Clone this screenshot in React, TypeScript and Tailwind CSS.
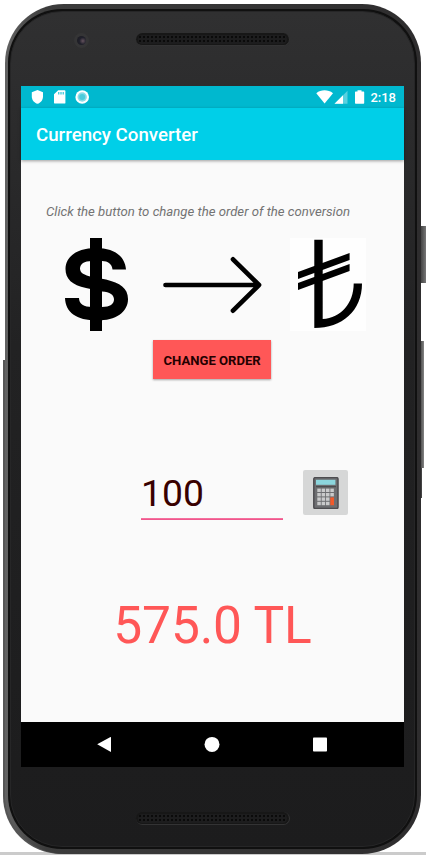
import React, { useState } from "react";

function Speaker() {
  return (
    <div className="h-[13px] w-[154px] rounded-full border-b border-r border-[#333334] bg-[#171717] p-[2px]">
      <div className="h-[9px] w-full rounded-full bg-[radial-gradient(circle,#0a0a0a_0.7px,#1d1d1e_1.6px)] bg-[length:4px_4px]" />
    </div>
  );
}

function StatusBar() {
  return (
    <div className="flex h-[22px] items-center justify-between bg-[#00b8cf] pl-[10px] pr-[8px] text-white">
      <div className="flex items-center gap-[8px]">
        <svg className="h-[14px] w-[14px]" viewBox="0 0 14 14" fill="#fff">
          <path d="M6.500 0 12 2.200V6.500C12 10 9.500 13 6.500 13.800 3.300 13 .8 10 .8 6.500V2.200Z" />
        </svg>
        <svg className="h-[14px] w-[14px]" viewBox="0 0 14 14">
          <path fill="#fff" d="M5.200.2H11.500Q12.400.2 12.400 1.400V12.400Q12.400 13.600 11.500 13.600H2.200Q1 13.600 1 12.400V4.200Z" />
          <path stroke="#00b8cf" d="M5.800 2V4.500M8 2V4.500M10.200 2V4.500" />
        </svg>
        <svg className="h-[14px] w-[14px]" viewBox="0 0 14 14">
          <circle cx="7.200" cy="7" r="6.800" fill="#fff" />
          <circle cx="7.200" cy="7" r="4.700" fill="#8bdbe6" />
          <circle cx="7.200" cy="7" r="3" fill="#4ccbdb" />
        </svg>
      </div>
      <div className="flex items-center">
        <svg className="h-[14px] w-[50px]" viewBox="0 0 50 14">
          <path fill="#fff" d="M.3 3.200C5-.6 12-.6 17 3.200L8.600 13.500Z" />
          <path fill="#fff" fillOpacity=".35" d="M31.500.7V13.700H18.500Z" />
          <path fill="#fff" d="M27 5.200V13.700H18.500Z" />
          <path fill="#fff" d="M41.500.2H45.500V1.500H47.500Q48.200 1.500 48.200 2.200V13.100Q48.200 13.800 47.500 13.800H39.700Q39 13.800 39 13.100V2.200Q39 1.500 39.700 1.500H41.500Z" />
        </svg>
        <span className="ml-[4px] pt-px text-[13px] font-medium leading-[14px]">2:18</span>
      </div>
    </div>
  );
}

function DollarSign() {
  return (
    <svg className="h-[93px] w-[64px]" viewBox="65 238 64 93">
      <path d="M126 269.500H112.500C112 264 108 261 102 261H92C84 261 80 264 80 268.500C80 273 84 275 92 277L106 279.500C120 283 128 288 128 299C128 312 116 320.500 97 320.500C76 320.500 65.500 312 65 298H79C79 304 84 307 92 307H102C110 307 114 304 114 299.500C114 295 110 292 102 291.500L86 288C72 285 65.500 279 65.500 269C65.500 256 78 248 96 248C114 248 125 256 126 269.500Z" />
      <path d="M90 238H102V331H90Z" />
    </svg>
  );
}

function LiraSign() {
  return (
    <svg className="h-[93px] w-[76px] bg-[#fefefe]" viewBox="290 238 76 93">
      <path d="M314.300 239.700H322.700V319C341 318 353.700 303 353.700 283.500H362C362 311 342 328 314.300 328Z" />
      <path d="M298 272 349.600 253V260L298 279ZM298 283 349.600 264V271L298 290Z" />
    </svg>
  );
}

function Calculator() {
  const keys: number[][] = [];
  for (let r = 0; r < 4; r++) for (let c = 0; c < 4; c++) if (!(c === 3 && r > 1)) keys.push([c, r]);
  return (
    <svg className="h-[32px] w-[26px]" viewBox="0 0 26 32">
      <rect x=".8" y=".6" width="24.200" height="31" rx="1.500" fill="#6d6e71" stroke="#4d4d50" strokeWidth="1.500" />
      <path stroke="#454548" d="M3 9.700H23" />
      <rect x="3" y="2.800" width="19.400" height="5" fill="#8cd6dd" />
      {keys.map(([c, r]) => (
        <rect key={`${c}-${r}`} x={4.300 + c * 4.350} y={11.600 + r * 4.400} width="3.500" height="3.400" fill="#c9cacb" />
      ))}
      <rect x="17.300" y="20.400" width="3.700" height="7.800" fill="#f15a2b" />
    </svg>
  );
}

export default function App() {
  const [amount, setAmount] = useState("100");
  return (
    <div className="relative h-[862px] w-[426px] overflow-hidden bg-white font-[Roboto,sans-serif]">
      <div className="absolute left-0 top-[852px] h-[3px] w-full bg-[#cbcbcb]" />
      <div className="absolute left-[3px] top-[360px] h-[494px] w-[100px] rounded-bl-[58px] bg-[#555]" />
      <div className="absolute left-[419px] top-[226px] h-[57px] w-[7px] bg-linear-to-r from-[#333] to-[#777]" />
      <div className="absolute left-[419px] top-[341px] h-[127px] w-[5px] bg-linear-to-r from-[#333] to-[#858585]" />
      <div className="absolute left-[419px] top-[468px] h-[30px] w-[3px] bg-[#444]" />
      <div className="relative pl-[5px] pt-[4px]">
        <div className="h-[850px] w-[416px] rounded-[59px] bg-linear-to-r from-[#626262] via-[#3c3c3c] via-10% to-[#2e2d2e] pb-[5px] pl-[3px] pr-[4px] pt-[5px]">
          <div className="h-[840px] w-[409px] rounded-[54px] bg-[#101010] p-[2px]">
            <div className="flex h-[836px] w-[405px] flex-col items-center rounded-[52px] border border-[#262627] bg-linear-to-b from-[#303031] via-[#222223] via-40% to-[#1c1c1d]">
              <div className="grid h-[74px] w-full grid-cols-[125px_154px_1fr] pt-[21px]">
                <div className="flex h-[15px] items-center justify-center pl-[16px]">
                  <div className="flex h-[15px] w-[15px] items-center justify-center rounded-full bg-[#353536]">
                    <div className="h-[9px] w-[9px] rounded-full bg-[radial-gradient(circle_at_65%_55%,#65535e,#20202b_45%,#19191d)]" />
                  </div>
                </div>
                <Speaker />
              </div>
              <div className="flex h-[681px] w-[383px] shrink-0 flex-col bg-[#fafafa]">
                <StatusBar />
                <header className="relative flex h-[52px] shrink-0 items-center bg-[#00cfe8] pl-[15px] pt-[2px] text-[18.700px] font-medium text-white shadow-[0_1px_3px_rgba(0,0,0,.38)]">
                  <h1>Currency Converter</h1>
                </header>
                <main className="flex h-[562px] shrink-0 flex-col pt-[43px]">
                  <p className="h-[18px] whitespace-nowrap pl-[25px] text-[13.160px] italic leading-[18px] text-[#737373]">
                    Click the button to change the order of the conversion
                  </p>
                  <div className="mt-[17px] flex pl-[44px]">
                    <DollarSign />
                    <svg className="ml-[32px] h-[93px] w-[104px]" viewBox="161 238 104 93" fill="none" stroke="#000" strokeWidth="4.700" strokeLinecap="round" strokeLinejoin="round">
                      <path d="M165.500 285H259M233 259.300 259 285 233 310.700" />
                    </svg>
                    <div className="ml-[25px]"><LiraSign /></div>
                  </div>
                  <button className="ml-[132.400px] mt-[9px] h-[39px] w-[117.500px] shrink-0 whitespace-nowrap bg-[#ff5757] pt-[2px] text-[13.100px] font-bold text-[#240000] shadow-[0_1px_2px_rgba(0,0,0,.35)]">
                    CHANGE ORDER
                  </button>
                  <div className="mt-[91px] flex pl-[120px]">
                    <div className="w-[142px]">
                      <input
                        aria-label="Amount"
                        className="block h-[48px] w-full bg-transparent pb-[2px] text-[37.300px] leading-[44px] text-[#380000] outline-none"
                        value={amount}
                        onChange={(e) => setAmount(e.target.value)}
                      />
                      <div className="h-[2px] w-full bg-linear-to-b from-[#f77ba6] to-[#ec4883]" />
                    </div>
                    <button aria-label="Convert" className="ml-[20px] flex h-[45px] w-[45px] items-center justify-center rounded-[2px] bg-[#d6d7d7]">
                      <Calculator />
                    </button>
                  </div>
                  <output className="mt-[76px] block text-center text-[51.500px] leading-[60px] tracking-[-0.150px] text-[#ff5757]">575.0 TL</output>
                </main>
                <nav className="flex h-[45px] shrink-0 items-center bg-black pb-px pl-[76px]">
                  <svg className="h-[16px] w-[238px]" viewBox="97 736 238 16" fill="#fff">
                    <path d="M97.200 744.300 110.500 737Q111 736.800 111 737.400V751.500Q111 752.200 110.500 751.800Z" />
                    <circle cx="212" cy="744.400" r="7.500" />
                    <rect x="313" y="737.500" width="14" height="14" rx=".8" />
                  </svg>
                </nav>
              </div>
              <div className="grid w-full grid-cols-[125px_154px_1fr] pt-[45px]">
                <span />
                <Speaker />
              </div>
            </div>
          </div>
        </div>
      </div>
    </div>
  );
}
